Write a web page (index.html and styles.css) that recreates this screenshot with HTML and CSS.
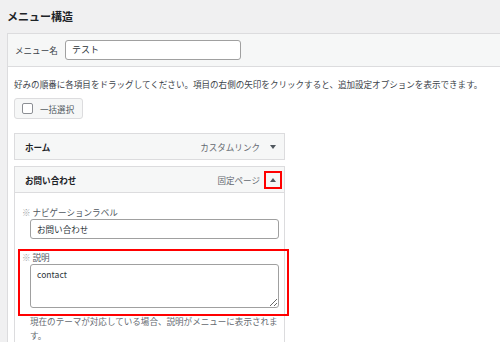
FILE: index.html
```html
<!DOCTYPE html>
<html lang="ja">
<head>
  <meta charset="UTF-8" />
  <title>メニュー構造</title>
  <link rel="stylesheet" href="styles.css">
</head>
<body>

  <h2 class="title">メニュー構造</h2>

  <div class="menu-box">
    <div class="menu-name">
      <label class="menu-name-label">メニュー名</label>
      <div class="text-input name-input">テスト</div>
    </div>

    <div class="menu-body">
      <p class="hint">好みの順番に各項目をドラッグしてください。項目の右側の矢印をクリックすると、追加設定オプションを表示できます。</p>

      <div class="bulk-select">
        <span class="check"></span>
        <span>一括選択</span>
      </div>

      <div class="menu-item">
        <div class="item-handle">
          <span class="item-title">ホーム</span>
          <span class="item-type">カスタムリンク</span>
          <span class="item-toggle"><span class="arrow-down"></span></span>
        </div>
      </div>

      <div class="menu-item open">
        <div class="item-handle">
          <span class="item-title">お問い合わせ</span>
          <span class="item-type">固定ページ</span>
          <span class="item-toggle marked"><span class="arrow-up"></span></span>
        </div>

        <div class="item-settings">
          <div class="field">
            <div class="field-label"><span class="mark">※</span> ナビゲーションラベル</div>
            <div class="text-input field-input">お問い合わせ</div>
          </div>

          <div class="field marked">
            <div class="field-label"><span class="mark">※</span> 説明</div>
            <textarea class="field-textarea" readonly>contact</textarea>
          </div>

          <p class="field-note">現在のテーマが対応している場合、説明がメニューに表示されます。</p>
        </div>
      </div>
    </div>
  </div>

</body>
</html>
```

FILE: styles.css
```css
body {
  margin: 0;
  background: #f0f0f1;
  color: #3c434a;
  font-family: "Noto Sans CJK JP", "Noto Sans", sans-serif;
  font-size: 8.55px;
  overflow: hidden;
}

.title {
  margin: 0;
  padding-left: 7px;
  height: 33px;
  line-height: 33px;
  font-size: 11px;
  font-weight: bold;
  color: #1d2327;
}

.menu-box {
  margin-left: 7px;
  border: 1px solid #dcdcde;
  border-right: none;
  background: #fff;
}

.menu-name {
  display: flex;
  align-items: center;
  height: 32px;
  padding-left: 7px;
  background: #f6f7f7;
  border-bottom: 1px solid #dcdcde;
}

.menu-name-label {
  width: 50px;
}

.text-input {
  box-sizing: border-box;
  height: 20px;
  line-height: 18px;
  border: 1px solid #a0a0a0;
  border-radius: 3px;
  background: #fff;
  color: #2c3338;
  padding: 0 6px;
}

.name-input {
  width: 176px;
  font-size: 9px;
}

.menu-body {
  padding: 10px 0 0 6px;
}

.hint {
  margin: 0;
  line-height: 15px;
}

.bulk-select {
  box-sizing: border-box;
  display: inline-flex;
  align-items: center;
  gap: 7px;
  margin-top: 6px;
  height: 21px;
  padding: 0 8px 0 7px;
  background: #f6f7f7;
  border: 1px solid #dcdcde;
  border-radius: 3px;
  color: #50575e;
}

.check {
  width: 9px;
  height: 9px;
  border: 1px solid #8c8f94;
  border-radius: 2px;
  background: #fff;
}

.menu-item {
  width: 271px;
  margin-top: 14px;
}

.menu-item + .menu-item {
  margin-top: 6px;
}

.item-handle {
  box-sizing: border-box;
  display: flex;
  align-items: center;
  height: 27px;
  padding: 0 2px 0 10px;
  background: #f6f7f7;
  border: 1px solid #dcdcde;
}

.item-title {
  flex: 1;
  font-weight: bold;
  color: #1d2327;
}

.item-type {
  color: #646970;
}

.item-toggle {
  box-sizing: border-box;
  display: flex;
  align-items: center;
  justify-content: center;
  width: 18px;
  height: 18px;
  margin-left: 4px;
}

.item-toggle.marked {
  border: 2px solid #ff0000;
}

.arrow-down,
.arrow-up {
  width: 0;
  height: 0;
  border-left: 3px solid transparent;
  border-right: 3px solid transparent;
}

.arrow-down {
  border-top: 4px solid #50575e;
}

.arrow-up {
  border-bottom: 4px solid #50575e;
}

.item-settings {
  border: 1px solid #dcdcde;
  border-top: none;
  padding: 11px 0 10px 3px;
  height: 200px;
}

.field {
  border: 2px solid transparent;
  margin-right: -5px;
  padding: 0 0 6px 2px;
}

.field.marked {
  border-color: #ff0000;
  margin-top: 2px;
}

.field-label {
  line-height: 12px;
  margin-bottom: 1px;
  color: #50575e;
}

.mark {
  color: #a0a3a6;
}

.field-input,
.field-textarea {
  box-sizing: border-box;
  width: 249px;
  margin-left: 8px;
}

.field-input {
  padding: 0 6px;
}

.field-textarea {
  display: block;
  height: 44px;
  border: 1px solid #a0a0a0;
  border-radius: 3px;
  padding: 3px 6px;
  font-family: "Noto Sans CJK JP", "Noto Sans", sans-serif;
  font-size: 8.55px;
  line-height: 12px;
  color: #2c3338;
  resize: vertical;
  outline: none;
}

.field-note {
  margin: -2px 0 0 12px;
  width: 250px;
  line-height: 14px;
  color: #646970;
}
```
